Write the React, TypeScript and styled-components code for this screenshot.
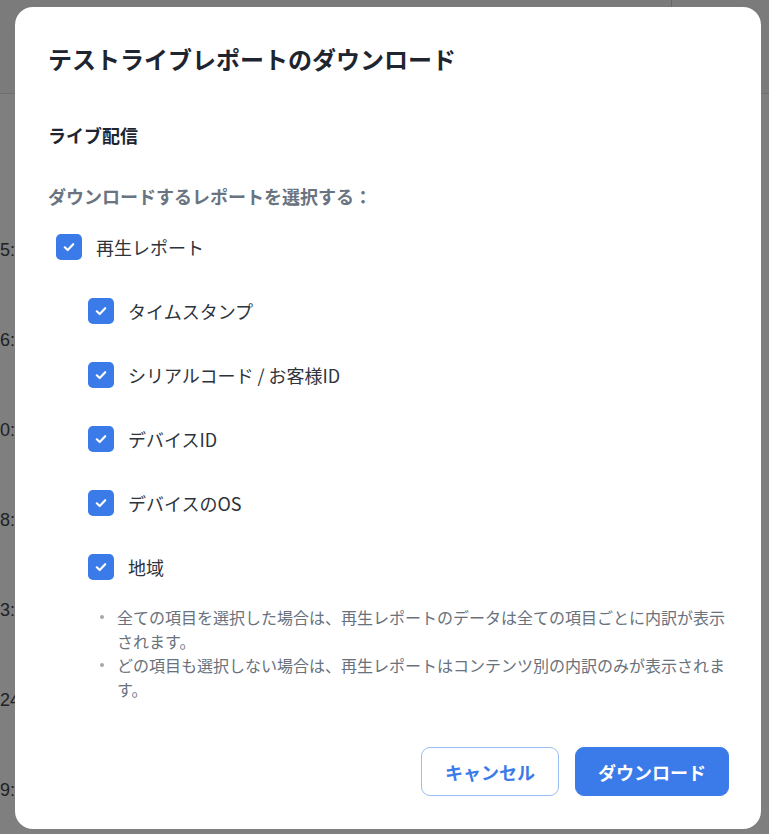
import React from 'react'
import styled, { createGlobalStyle } from 'styled-components'

const GlobalStyle = createGlobalStyle`
  html, body {
    margin: 0;
    padding: 0;
    width: 769px;
    height: 834px;
    overflow: hidden;
    font-family: 'Noto Sans CJK JP', 'Noto Sans', sans-serif;
  }
`

const Page = styled.div`
  position: relative;
  width: 769px;
  height: 834px;
  background: #ffffff;
  overflow: hidden;
`

const Header = styled.div`
  height: 93px;
  border-bottom: 1px solid #dedede;
  background: #f7f7f7;
  display: flex;
  justify-content: flex-end;
`

const HeaderDivider = styled.div`
  width: 1px;
  height: 20px;
  margin-right: 97px;
  background: #cfcfcf;
`

const TimeColumn = styled.div`
  display: flex;
  flex-direction: column;
  gap: 66px;
  padding-top: 144px;
`

const TimeCell = styled.div`
  font-family: 'Liberation Sans', sans-serif;
  font-size: 18px;
  line-height: 24px;
  color: #444;
`

const Overlay = styled.div`
  position: absolute;
  inset: 0;
  background: rgba(0, 0, 0, 0.5);
  display: flex;
  align-items: flex-start;
  padding: 7px 0 0 15px;
  box-sizing: border-box;
`

const Modal = styled.div`
  width: 746px;
  height: 822px;
  box-sizing: border-box;
  background: #ffffff;
  border-radius: 18px;
  padding: 36px 32px 33px 33px;
  display: flex;
  flex-direction: column;
`

const Title = styled.h2`
  margin: 0;
  font-size: 24px;
  line-height: 32px;
  font-weight: 700;
  color: #1e2530;
`

const SectionTitle = styled.h3`
  margin: 47px 0 0;
  font-size: 18px;
  line-height: 26px;
  font-weight: 700;
  color: #1e2530;
`

const Prompt = styled.p`
  margin: 35px 0 0;
  font-size: 18px;
  line-height: 26px;
  font-weight: 700;
  color: #6a7480;
`

const OptionList = styled.div`
  margin-top: 25px;
  display: flex;
  flex-direction: column;
  gap: 38px;
`

const OptionRow = styled.label<{ $indent: boolean }>`
  display: flex;
  align-items: center;
  gap: 14px;
  height: 26px;
  padding-left: ${(p) => (p.$indent ? '40px' : '8px')};
  cursor: pointer;
`

const Box = styled.span`
  width: 26px;
  height: 26px;
  border-radius: 5px;
  background: #3a7ae9;
  display: flex;
  align-items: center;
  justify-content: center;
  flex-shrink: 0;
`

const OptionText = styled.span`
  font-size: 18px;
  line-height: 26px;
  color: #2d333b;
`

const Notes = styled.ul`
  list-style: none;
  margin: 25px 0 0;
  padding: 0 0 0 52px;
`

const Note = styled.li`
  display: flex;
  gap: 13px;
  font-size: 16px;
  line-height: 24px;
  color: #68717c;
`

const Dot = styled.span`
  width: 4px;
  height: 4px;
  border-radius: 50%;
  background: #a3a9b0;
  margin-top: 10px;
  flex-shrink: 0;
`

const Footer = styled.div`
  margin-top: auto;
  display: flex;
  justify-content: flex-end;
  gap: 16px;
`

const Button = styled.button<{ $primary?: boolean }>`
  height: 49px;
  padding: 0 ${(p) => (p.$primary ? '22px' : '23px')};
  border-radius: 9px;
  font-family: inherit;
  font-size: 18px;
  font-weight: 700;
  cursor: pointer;
  border: 1px solid ${(p) => (p.$primary ? '#3a7ae9' : '#9bbdf3')};
  background: ${(p) => (p.$primary ? '#3a7ae9' : '#ffffff')};
  color: ${(p) => (p.$primary ? '#ffffff' : '#3a7ae9')};
`

const Check = () => (
  <svg width='14' height='14' viewBox='0 0 14 14' fill='none'>
    <path d='M2.8 7.3 L5.7 10 L11.2 4.2' stroke='#ffffff' strokeWidth='2.2' strokeLinecap='round' strokeLinejoin='round' />
  </svg>
)

const OPTIONS = [
  { id: 1, label: '再生レポート', indent: false },
  { id: 2, label: 'タイムスタンプ', indent: true },
  { id: 3, label: 'シリアルコード / お客様ID', indent: true },
  { id: 4, label: 'デバイスID', indent: true },
  { id: 5, label: 'デバイスのOS', indent: true },
  { id: 6, label: '地域', indent: true },
]

const NOTES = [
  '全ての項目を選択した場合は、再生レポートのデータは全ての項目ごとに内訳が表示されます。',
  'どの項目も選択しない場合は、再生レポートはコンテンツ別の内訳のみが表示されます。',
]

// only the left edge of the table behind the dialog shows
const TIMES = ['5:', '6:', '0:', '8:', '3:', '24', '9:']

const App = () => {
  return (
    <Page>
      <GlobalStyle />
      <Header>
        <HeaderDivider />
      </Header>
      <TimeColumn>
        {TIMES.map((t, i) => (
          <TimeCell key={i}>{t}</TimeCell>
        ))}
      </TimeColumn>
      <Overlay>
        <Modal>
          <Title>テストライブレポートのダウンロード</Title>
          <SectionTitle>ライブ配信</SectionTitle>
          <Prompt>ダウンロードするレポートを選択する：</Prompt>
          <OptionList>
            {OPTIONS.map((opt) => (
              <OptionRow key={opt.id} $indent={opt.indent}>
                <Box>
                  <Check />
                </Box>
                <OptionText>{opt.label}</OptionText>
              </OptionRow>
            ))}
          </OptionList>
          <Notes>
            {NOTES.map((n, i) => (
              <Note key={i}>
                <Dot />
                <span>{n}</span>
              </Note>
            ))}
          </Notes>
          <Footer>
            <Button>キャンセル</Button>
            <Button $primary>ダウンロード</Button>
          </Footer>
        </Modal>
      </Overlay>
    </Page>
  )
}

export default App
